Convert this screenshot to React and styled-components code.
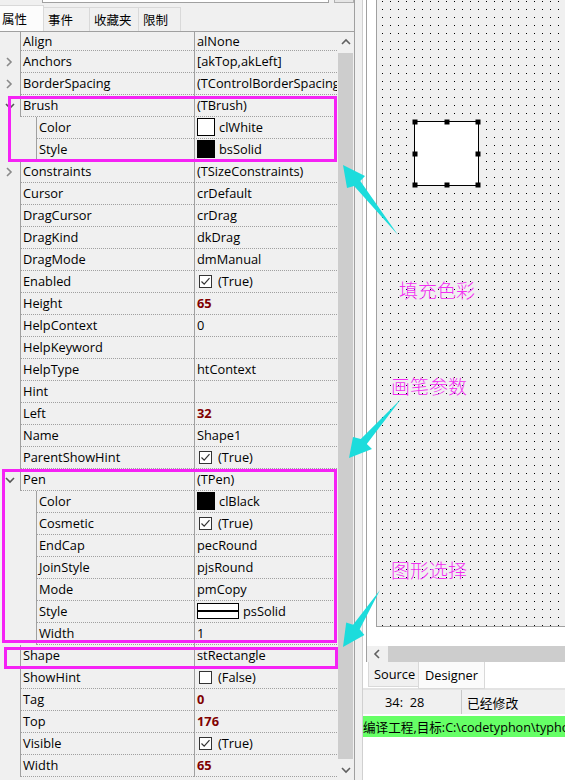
import styled, { createGlobalStyle } from 'styled-components'

const GlobalStyle = createGlobalStyle`
  * { box-sizing: border-box; }
  body {
    margin: 0;
    background: #fff;
    font-family: "Open Sans", "Noto Sans CJK SC", sans-serif;
    font-size: 12.8px;
    color: #000;
  }
`

const Screen = styled.div`
  position: relative;
  width: 565px;
  height: 780px;
  overflow: hidden;
  display: flex;
  background: #fff;
`

/* ---------- left: object inspector ---------- */

const Inspector = styled.div`
  width: 355px;
  display: flex;
  flex-direction: column;
  background: #f0f0f0;
  border-right: 1px solid #a0a0a0;
`

const TopStrip = styled.div`
  height: 5px;
  display: flex;
  gap: 5px;
  padding-left: 42px;
`

const ComboEdge = styled.div`
  width: 288px;
  height: 3px;
  background: #fff;
  border: 1px solid #a0a0a0;
  border-top: none;
`

const ComboButton = styled.div`
  width: 20px;
  height: 3px;
  background: #e6e6e6;
  border: 1px solid #b0b0b0;
  border-top: none;
`

const TabBar = styled.div`
  height: 26px;
  display: flex;
  align-items: flex-end;
`

const Tab = styled.div`
  width: ${p => p.$w}px;
  height: ${p => (p.$active ? 26 : 24)}px;
  padding: 0 ${p => (p.$active ? 2 : 4)}px;
  display: flex;
  align-items: center;
  font-family: "Noto Sans CJK SC", sans-serif;
  font-size: 12.5px;
  background: ${p => (p.$active ? '#fcfcfc' : '#f0f0f0')};
  border: 1px solid #d9d9d9;
  border-bottom: none;
  border-left-width: ${p => (p.$first ? 0 : 1)}px;
  margin-left: ${p => (p.$first ? 0 : -1)}px;
`

const GridFrame = styled.div`
  flex: 1;
  display: flex;
  border-top: 1px solid #a0a0a0;
`

const Rows = styled.div`
  width: 337px;
  overflow: hidden;
`

const Row = styled.div`
  height: ${p => (p.$first ? 19 : 22)}px;
  display: flex;
`

const Gutter = styled.div`
  width: ${p => (p.$sub ? 36 : 20)}px;
  flex: none;
  display: flex;
  align-items: center;
  justify-content: center;
  padding-right: ${p => (p.$sub ? 16 : 0)}px;
`

const NameCell = styled.div`
  flex: 1;
  display: flex;
  align-items: center;
  padding: 0 0 1px 2px;
  border-left: 1px solid #a0a0a0;
  border-bottom: 1px dotted #a0a0a0;
  white-space: nowrap;
`

const ValueCell = styled.div`
  width: 143px;
  flex: none;
  display: flex;
  align-items: center;
  gap: 4px;
  padding: 0 0 1px 2px;
  border-left: 1px solid #a0a0a0;
  border-bottom: 1px dotted #a0a0a0;
  white-space: nowrap;
  overflow: hidden;
  color: ${p => (p.$bold ? '#800000' : '#000')};
  font-weight: ${p => (p.$bold ? 700 : 400)};
`

const Swatch = styled.span`
  width: 18px;
  height: 18px;
  flex: none;
  background: ${p => p.$color};
  border: 1px solid #000;
`

const CheckBox = styled.span`
  width: 13px;
  height: 13px;
  flex: none;
  margin: 0 2px 0 2px;
  border: 1px solid #333;
  background: #fff;
  display: flex;
  align-items: center;
  justify-content: center;
`

const PenSample = styled.span`
  width: 42px;
  height: 16px;
  flex: none;
  background: #fff;
  border: 1px solid #000;
  display: flex;
  align-items: center;
  &::after {
    content: '';
    flex: 1;
    height: 2px;
    background: #000;
  }
`

const VScroll = styled.div`
  width: 17px;
  display: flex;
  flex-direction: column;
  align-items: center;
  background: #f0f0f0;
`

const ScrollArrow = styled.div`
  height: ${p => p.$h}px;
  display: flex;
  align-items: center;
  justify-content: center;
`

const ScrollThumb = styled.div`
  flex: 1;
  width: 15px;
  background: #cdcdcd;
`

/* ---------- splitter + right side ---------- */

const Splitter = styled.div`
  width: 8px;
  background: #f0f0f0;
  border-right: 1px solid #d0d0d0;
`

const Editor = styled.div`
  flex: 1;
  display: flex;
  flex-direction: column;
  background: #fff;
  min-width: 0;
`

const DesignerFrame = styled.div`
  height: 662px;
  margin-left: 3px;
  display: flex;
  flex-direction: column;
  border-left: 1px solid #a0a0a0;
`

const CanvasWrap = styled.div`
  flex: 1;
  padding: 0 0 19px 9px;
  background: #fff;
`

const Canvas = styled.div`
  position: relative;
  height: 627px;
  background-color: #f0f0f0;
  background-image: conic-gradient(at 1px 1px, transparent 75%, #000 0);
  background-size: 8px 8px;
  background-position: 5px 1px;
  border-left: 1px solid #a0a0a0;
  border-bottom: 1px solid #a0a0a0;
`

const ShapeBox = styled.div`
  position: absolute;
  left: 37px;
  top: 121px;
  width: 65px;
  height: 65px;
  background: #fff;
  border: 1px solid #000;
`

const Handle = styled.span`
  position: absolute;
  width: 5px;
  height: 5px;
  background: #000;
  left: ${p => p.$x}%;
  top: ${p => p.$y}%;
  transform: translate(-50%, -50%);
`

const HScroll = styled.div`
  height: 16px;
  display: flex;
  background: #f0f0f0;
`

const HArrow = styled.div`
  width: 21px;
  display: flex;
  align-items: center;
  justify-content: center;
`

const HThumb = styled.div`
  flex: 1;
  background: #cdcdcd;
`

const PageTabs = styled.div`
  height: 28px;
  display: flex;
  align-items: flex-start;
  padding-left: 5px;
  border-bottom: 2px solid #e3e3e3;
`

const PageTab = styled.div`
  height: ${p => (p.$active ? 27 : 25)}px;
  width: ${p => p.$w}px;
  padding-left: ${p => (p.$active ? 6 : 5)}px;
  display: flex;
  align-items: center;
  background: ${p => (p.$active ? '#fbfbfb' : '#f0f0f0')};
  border: 1px solid #d9d9d9;
  border-top: none;
  margin-left: ${p => (p.$active ? -1 : 0)}px;
`

const StatusBar = styled.div`
  height: 24px;
  display: flex;
  background: #f0f0f0;
`

const StatusCell = styled.div`
  width: ${p => (p.$w ? `${p.$w}px` : 'auto')};
  flex: ${p => (p.$w ? 'none' : 1)};
  display: flex;
  align-items: center;
  padding-left: ${p => p.$pad}px;
  border-right: ${p => (p.$w ? '1px solid #c8c8c8' : 'none')};
  white-space: nowrap;
`

const MessageBar = styled.div`
  height: 21px;
  margin-top: 2px;
  background: #66ff66;
  display: flex;
  align-items: center;
  white-space: nowrap;
  overflow: hidden;
  font-size: 12.6px;
`

/* ---------- annotations ---------- */

const Highlight = styled.div`
  position: absolute;
  left: ${p => p.$x}px;
  top: ${p => p.$y}px;
  width: ${p => p.$w}px;
  height: ${p => p.$h}px;
  border: 3px solid #f522f5;
  pointer-events: none;
`

const Note = styled.div`
  position: absolute;
  left: ${p => p.$x}px;
  top: ${p => p.$y}px;
  font-family: "Noto Sans CJK SC", sans-serif;
  font-size: 19px;
  font-weight: 300;
  line-height: 24px;
  color: #f22ef2;
  white-space: nowrap;
`

const ArrowLayer = styled.svg`
  position: absolute;
  left: 0;
  top: 0;
  pointer-events: none;
`

const Chevron = ({ dir, color = '#8a8a8a' }) => {
  const d = {
    right: 'M2 1 L6 5 L2 9',
    down: 'M1 3 L5 7 L9 3',
    up: 'M1 6 L5 2 L9 6',
    left: 'M6 1 L2 5 L6 9',
  }[dir]
  return (
    <svg width="10" height="10" viewBox="0 0 10 10">
      <path d={d} fill="none" stroke={color} strokeWidth="1.6" />
    </svg>
  )
}

const Tick = () => (
  <svg width="11" height="11" viewBox="0 0 11 11">
    <path d="M1.5 5.5 L4.2 8.2 L9.5 2.2" fill="none" stroke="#333" strokeWidth="1.2" />
  </svg>
)

const props = [
  { name: 'Align', value: 'alNone' },
  { name: 'Anchors', value: '[akTop,akLeft]', arrow: 'right' },
  { name: 'BorderSpacing', value: '(TControlBorderSpacing)', arrow: 'right' },
  { name: 'Brush', value: '(TBrush)', arrow: 'down' },
  { name: 'Color', value: 'clWhite', sub: true, swatch: '#fff' },
  { name: 'Style', value: 'bsSolid', sub: true, swatch: '#000' },
  { name: 'Constraints', value: '(TSizeConstraints)', arrow: 'right' },
  { name: 'Cursor', value: 'crDefault' },
  { name: 'DragCursor', value: 'crDrag' },
  { name: 'DragKind', value: 'dkDrag' },
  { name: 'DragMode', value: 'dmManual' },
  { name: 'Enabled', value: '(True)', check: true },
  { name: 'Height', value: '65', bold: true },
  { name: 'HelpContext', value: '0' },
  { name: 'HelpKeyword', value: '' },
  { name: 'HelpType', value: 'htContext' },
  { name: 'Hint', value: '' },
  { name: 'Left', value: '32', bold: true },
  { name: 'Name', value: 'Shape1' },
  { name: 'ParentShowHint', value: '(True)', check: true },
  { name: 'Pen', value: '(TPen)', arrow: 'down' },
  { name: 'Color', value: 'clBlack', sub: true, swatch: '#000' },
  { name: 'Cosmetic', value: '(True)', sub: true, check: true },
  { name: 'EndCap', value: 'pecRound', sub: true },
  { name: 'JoinStyle', value: 'pjsRound', sub: true },
  { name: 'Mode', value: 'pmCopy', sub: true },
  { name: 'Style', value: 'psSolid', sub: true, pen: true },
  { name: 'Width', value: '1', sub: true },
  { name: 'Shape', value: 'stRectangle' },
  { name: 'ShowHint', value: '(False)', check: false },
  { name: 'Tag', value: '0', bold: true },
  { name: 'Top', value: '176', bold: true },
  { name: 'Visible', value: '(True)', check: true },
  { name: 'Width', value: '65', bold: true },
]

const handles = [
  [0, 0], [50, 0], [100, 0],
  [0, 50], [100, 50],
  [0, 100], [50, 100], [100, 100],
]

function PropRow({ p, first }) {
  return (
    <Row $first={first}>
      <Gutter $sub={p.sub}>
        {p.arrow && <Chevron dir={p.arrow} color={p.arrow === 'down' ? '#555' : '#8a8a8a'} />}
      </Gutter>
      <NameCell>{p.name}</NameCell>
      <ValueCell $bold={p.bold}>
        {p.swatch && <Swatch $color={p.swatch} />}
        {p.check !== undefined && <CheckBox>{p.check && <Tick />}</CheckBox>}
        {p.pen && <PenSample />}
        {p.value}
      </ValueCell>
    </Row>
  )
}

export default function App() {
  return (
    <Screen>
      <GlobalStyle />

      <Inspector>
        <TopStrip>
          <ComboEdge />
          <ComboButton />
        </TopStrip>
        <TabBar>
          <Tab $w={44} $active $first>属性</Tab>
          <Tab $w={47}>事件</Tab>
          <Tab $w={50}>收藏夹</Tab>
          <Tab $w={43}>限制</Tab>
        </TabBar>
        <GridFrame>
          <Rows>
            {props.map((p, i) => <PropRow key={i} p={p} first={i === 0} />)}
          </Rows>
          <VScroll>
            <ScrollArrow $h={21}><Chevron dir="up" color="#606060" /></ScrollArrow>
            <ScrollThumb />
            <ScrollArrow $h={21}><Chevron dir="down" color="#606060" /></ScrollArrow>
          </VScroll>
        </GridFrame>
      </Inspector>

      <Splitter />

      <Editor>
        <DesignerFrame>
          <CanvasWrap>
            <Canvas>
              <ShapeBox>
                {handles.map(([x, y], i) => <Handle key={i} $x={x} $y={y} />)}
              </ShapeBox>
            </Canvas>
          </CanvasWrap>
          <HScroll>
            <HArrow><Chevron dir="left" color="#606060" /></HArrow>
            <HThumb />
          </HScroll>
        </DesignerFrame>
        <PageTabs>
          <PageTab $w={51}>Source</PageTab>
          <PageTab $w={67} $active>Designer</PageTab>
        </PageTabs>
        <StatusBar>
          <StatusCell $w={99} $pad={22}>34:&nbsp; 28</StatusCell>
          <StatusCell $pad={5}>已经修改</StatusCell>
        </StatusBar>
        <MessageBar>编译工程,目标:C:\codetyphon\typhon</MessageBar>
      </Editor>

      <Highlight $x={8} $y={96} $w={329} $h={66} />
      <Highlight $x={2} $y={469} $w={335} $h={174} />
      <Highlight $x={4} $y={647} $w={334} $h={22} />

      <Note $x={399} $y={278}>填充色彩</Note>
      <Note $x={391} $y={374}>画笔参数</Note>
      <Note $x={391} $y={558}>图形选择</Note>

      <ArrowLayer width="565" height="780" viewBox="0 0 565 780">
        <g fill="#1cdcdc">
          <polygon points="343,165 365,176 360.3,181.1 398,235 354.1,186.1 347,188" />
          <polygon points="349,458 353,437 360.8,438.9 401,399 366.8,444.1 372,449" />
          <polygon points="343,647 346.2,622.5 353.1,624.8 380,590 359.7,629.2 364.4,634.9" />
        </g>
      </ArrowLayer>
    </Screen>
  )
}
